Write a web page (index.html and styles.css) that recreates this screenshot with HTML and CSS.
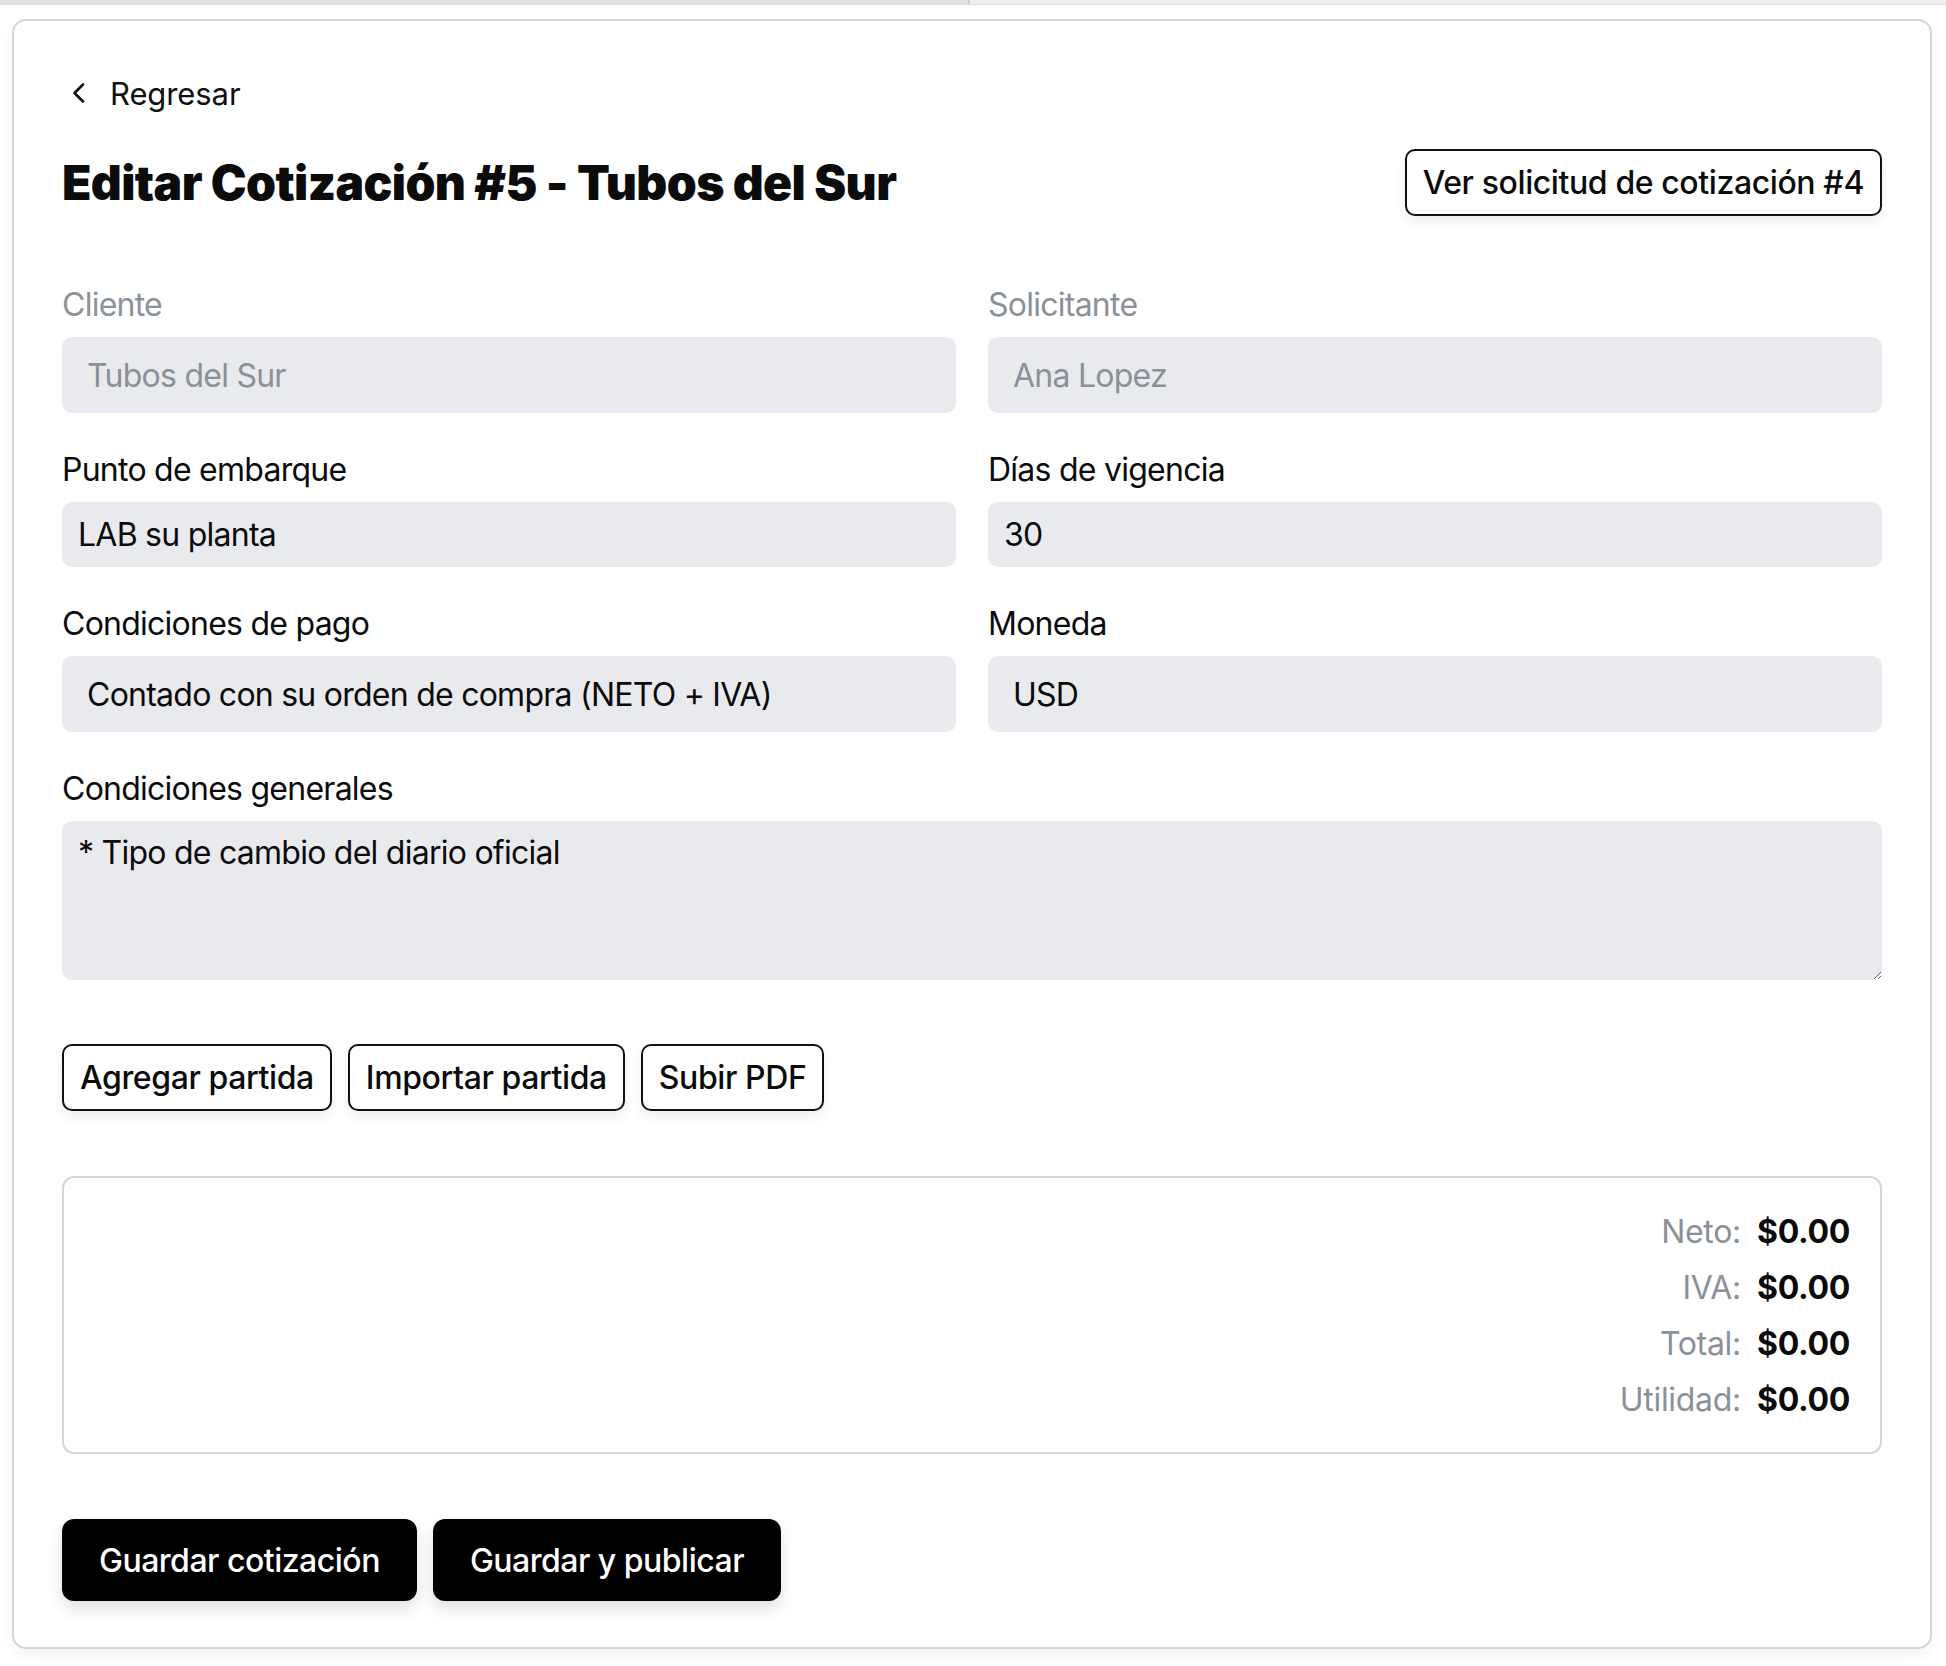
FILE: index.html
```html
<!DOCTYPE html>
<html lang="es">
<head>
<meta charset="utf-8">
<title>Editar Cotización #5</title>
<link rel="stylesheet" href="styles.css">
</head>
<body>
<div class="topbar"><div class="topbar-left"></div><div class="topbar-right"></div></div>
<main class="card">
  <a class="back" href="#">
    <svg class="back-icon" viewBox="0 0 28 28" width="28" height="28" aria-hidden="true"><polyline points="17,5.5 8.5,14 17,22.5" fill="none" stroke="currentColor" stroke-width="2.6" stroke-linecap="round" stroke-linejoin="round"/></svg>
    <span>Regresar</span>
  </a>
  <div class="header">
    <h1 class="title">Editar Cotización #5 - Tubos del Sur</h1>
    <button class="btn-outline">Ver solicitud de cotización #4</button>
  </div>

  <div class="grid">
    <div class="field">
      <label class="label label-muted">Cliente</label>
      <div class="input input-disabled">Tubos del Sur</div>
    </div>
    <div class="field">
      <label class="label label-muted">Solicitante</label>
      <div class="input input-disabled">Ana Lopez</div>
    </div>
    <div class="field">
      <label class="label">Punto de embarque</label>
      <div class="input input-text">LAB su planta</div>
    </div>
    <div class="field">
      <label class="label">Días de vigencia</label>
      <div class="input input-text">30</div>
    </div>
    <div class="field">
      <label class="label">Condiciones de pago</label>
      <div class="input input-select">Contado con su orden de compra (NETO + IVA)</div>
    </div>
    <div class="field">
      <label class="label">Moneda</label>
      <div class="input input-select">USD</div>
    </div>
    <div class="field field-full">
      <label class="label">Condiciones generales</label>
      <textarea class="textarea">* Tipo de cambio del diario oficial</textarea>
    </div>
  </div>

  <div class="actions">
    <button class="btn-outline">Agregar partida</button>
    <button class="btn-outline">Importar partida</button>
    <button class="btn-outline">Subir PDF</button>
  </div>

  <section class="totals">
    <div class="totals-grid">
      <span class="t-label">Neto:</span><span class="t-value">$0.00</span>
      <span class="t-label">IVA:</span><span class="t-value">$0.00</span>
      <span class="t-label">Total:</span><span class="t-value">$0.00</span>
      <span class="t-label">Utilidad:</span><span class="t-value">$0.00</span>
    </div>
  </section>

  <div class="footer-actions">
    <button class="btn-dark">Guardar cotización</button>
    <button class="btn-dark">Guardar y publicar</button>
  </div>
</main>
</body>
</html>
```
FILE: styles.css
```css
* { box-sizing: border-box; }
html, body { margin: 0; padding: 0; background: #ffffff; }
body {
  font-family: "Inter", "Noto Sans", "Liberation Sans", sans-serif;
  color: #0b0b0c;
}
.topbar {
  display: flex;
  height: 5px;
  border-bottom: 1px solid #dcdcdc;
}
.topbar-left { width: 970px; background: #e3e3e1; border-right: 2px solid #cfcfcf; }
.topbar-right { flex: 1; background: #eff0ee; }

.card {
  margin: 14px 14px 18px 12px;
  border: 2px solid #d3d6db;
  border-radius: 14px;
  padding: 52px 48px 46px 48px;
  box-shadow: 0 6px 14px rgba(0, 0, 0, 0.05);
}

.back {
  display: flex;
  align-items: center;
  gap: 16px;
  height: 40px;
  font-size: 31px;
  letter-spacing: -0.1px;
  color: #111;
  text-decoration: none;
}
.back-icon { margin-left: 4px; color: #111; }

.header {
  display: flex;
  align-items: center;
  justify-content: space-between;
  margin-top: 36px;
  margin-bottom: 65px;
}
.title {
  margin: 0;
  font-size: 48px;
  line-height: 60px;
  font-weight: 900;
  letter-spacing: -0.6px;
}

.btn-outline {
  font-family: inherit;
  font-size: 32px;
  font-weight: 500;
  letter-spacing: -0.4px;
  color: #0b0b0c;
  background: #fff;
  border: 2px solid #111;
  border-radius: 10px;
  height: 67px;
  padding: 0 16px;
  box-shadow: 0 6px 12px rgba(0, 0, 0, 0.07);
  cursor: pointer;
}

.grid {
  display: grid;
  grid-template-columns: 1fr 1fr;
  column-gap: 32px;
  row-gap: 33px;
}
.field { display: flex; flex-direction: column; }
.field-full { grid-column: 1 / -1; }
.label {
  font-size: 32px;
  line-height: 48px;
  letter-spacing: -0.75px;
  margin-bottom: 8px;
  color: #0b0b0c;
}
.label-muted { color: #8b9199; }

.input {
  background: #e9eaee;
  border-radius: 10px;
  font-size: 32px;
  letter-spacing: -0.75px;
  display: flex;
  align-items: center;
  color: #0b0b0c;
}
.input-disabled { height: 76px; padding-left: 25px; color: #8b9199; }
.input-text { height: 65px; padding-left: 16px; }
.input-select { height: 76px; padding-left: 25px; }

.textarea {
  display: block;
  width: 100%;
  height: 159px;
  background: #e9eaee;
  border: none;
  border-radius: 10px;
  padding: 16px;
  font-family: inherit;
  font-size: 32px;
  line-height: 32px;
  letter-spacing: -0.75px;
  color: #0b0b0c;
  resize: vertical;
  outline: none;
}

.actions {
  display: flex;
  gap: 16px;
  margin-top: 64px;
}

.totals {
  margin-top: 65px;
  border: 2px solid #d3d6db;
  border-radius: 12px;
  padding: 30px 30px 28px;
}
.totals-grid {
  display: grid;
  grid-template-columns: auto auto;
  justify-content: end;
  column-gap: 16px;
  row-gap: 8px;
  font-size: 32px;
  line-height: 48px;
  letter-spacing: -0.3px;
}
.t-label { text-align: right; color: #8b9199; }
.t-value { font-weight: 700; color: #0b0b0c; }

.footer-actions {
  display: flex;
  gap: 16px;
  margin-top: 65px;
}
.btn-dark {
  font-family: inherit;
  font-size: 32px;
  font-weight: 500;
  letter-spacing: -0.5px;
  color: #fff;
  background: #000;
  border: none;
  border-radius: 12px;
  height: 82px;
  padding: 0 37px;
  box-shadow: 0 8px 16px rgba(0, 0, 0, 0.12);
  cursor: pointer;
}
```
